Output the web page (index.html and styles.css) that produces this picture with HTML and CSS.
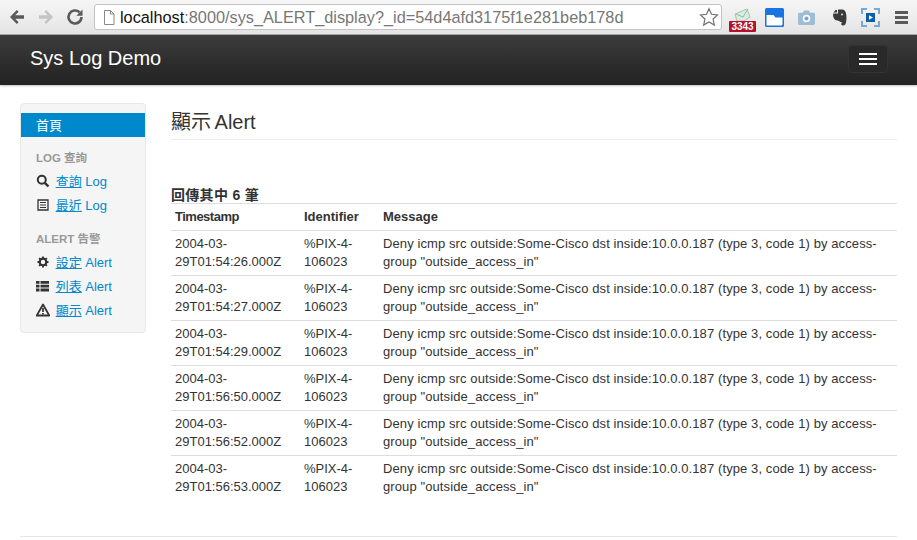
FILE: index.html
```html
<!DOCTYPE html>
<html lang="zh-Hant">
<head>
  <meta charset="UTF-8">
  <title>Sys Log Demo</title>
  <link rel="stylesheet" href="styles.css">
</head>
<body>
  <div class="browser-bar">
    <svg class="nav-icon" width="20" height="20" viewBox="0 0 20 20"><path d="M17 8.200H8.200l3.400-3.400-1.800-1.800L3 10l6.800 7 1.800-1.800-3.400-3.400H17z" fill="#5a5a5a"/></svg>
    <svg class="nav-icon" width="20" height="20" viewBox="0 0 20 20"><path d="M3 8.200h8.800L8.400 4.800 10.200 3 17 10l-6.800 7-1.800-1.800 3.400-3.400H3z" fill="#c4c4c4"/></svg>
    <svg class="nav-icon" width="20" height="20" viewBox="0 0 20 20"><path d="M16.500 10a6.500 6.500 0 1 1-2-4.700" fill="none" stroke="#5a5a5a" stroke-width="2.600"/><path d="M17.500 2.500v6.200h-6.200z" fill="#5a5a5a"/></svg>
    <div class="omnibox">
      <svg width="12" height="15" viewBox="0 0 12 15"><path d="M1.500.5h6l3.500 3.500v10.500H1.500z M7.500.5V4H11" fill="#fff" stroke="#8a8a8a"/></svg>
      <span class="url"><span class="host">localhost</span>:8000/sys_ALERT_display?_id=54d4afd3175f1e281beb178d</span>
      <svg class="star" width="20" height="20" viewBox="0 0 20 20"><path d="M10 1.800l2.500 5.500 6 .7-4.400 4 1.200 6L10 15l-5.300 3 1.200-6-4.400-4 6-.7z" fill="#fff" stroke="#707070" stroke-width="1.200"/></svg>
    </div>
    <div class="extensions">
      <div class="ext-mail">
        <svg width="20" height="14" viewBox="0 0 20 14"><path d="M2 6 14 1l3 8-6 4H4z" fill="#dcebe2" stroke="#9cc7ae"/><path d="M3 6l7 3 5-8" fill="none" stroke="#8cbda0"/></svg>
        <span class="badge">3343</span>
      </div>
      <svg width="19" height="19" viewBox="0 0 19 19"><rect width="19" height="19" rx="1.500" fill="#1a73e0"/><path d="M1.500 7h7l2 2.500h7V16a1.500 1.500 0 0 1-1 1.500H1.500z" fill="#fff"/></svg>
      <svg class="ext-camera" width="17" height="15" viewBox="0 0 18 16"><path d="M1.500 3H5l1.500-2.500h5L13 3h3.500A1.500 1.500 0 0 1 18 4.500V14.500A1.500 1.500 0 0 1 16.500 16h-15A1.500 1.500 0 0 1 0 14.500V4.500A1.500 1.500 0 0 1 1.500 3z" fill="#9dbcd6"/><circle cx="9" cy="9" r="4" fill="#fff"/><circle cx="9" cy="9" r="2.200" fill="#7ba5c8"/></svg>
      <svg class="ext-note" width="15" height="17" viewBox="0 0 15 17"><path d="M3.500 1H5v2.500H1.500zM6 .5h4c3 0 4 2.500 4.300 5.500.3 3.500.2 7-1 9.500-1 1-3 1.300-3.800.5-.6-1 0-2.500 1-2.500-1-.5-2.800-.3-3.300-1.500C4.500 11.500 2.800 11 2 9.500 1 8 1 6 1.200 4.500H6z" fill="#3a3a3a"/><circle cx="10" cy="5.500" r="1" fill="#ddd"/></svg>
      <svg width="19" height="19" viewBox="0 0 19 19"><path d="M1 6V1h5M13 1h5v5M18 13v5h-5M6 18H1v-5" fill="none" stroke="#7aa9d0" stroke-width="2"/><rect x="5" y="5" width="9" height="9" fill="#0f5fa8"/><path d="M8 7.200v4.600l4-2.300z" fill="#fff"/></svg>
    </div>
    <div class="menu-icon"><span></span><span></span><span></span></div>
  </div>

  <nav class="navbar">
    <a class="brand">Sys Log Demo</a>
    <button class="toggle"><span></span><span></span><span></span></button>
  </nav>

  <div class="page">
    <aside class="sidebar">
      <a class="nav-item active">首頁</a>
      <div class="nav-header">LOG 查詢</div>
      <a class="nav-item">
        <svg class="glyph" width="14" height="14" viewBox="0 0 14 14"><circle cx="5.800" cy="5.800" r="4" fill="none" stroke="#333" stroke-width="2"/><path d="M8.800 8.800l3.700 3.700" stroke="#333" stroke-width="2.400"/></svg>
        <span class="cjk-link">查詢</span> Log
      </a>
      <a class="nav-item">
        <svg class="glyph" width="14" height="14" viewBox="0 0 14 14"><path d="M2 2h10v10H2z" fill="none" stroke="#333" stroke-width="1.300"/><path d="M4 4.500h6M4 7h6M4 9.500h6" stroke="#333" stroke-width="1.200"/></svg>
        <span class="cjk-link">最近</span> Log
      </a>
      <div class="nav-header second">ALERT 告警</div>
      <a class="nav-item">
        <svg class="glyph" width="14" height="14" viewBox="0 0 14 14"><circle cx="7" cy="7" r="3.300" fill="none" stroke="#333" stroke-width="2.200"/><path d="M7 1.500v2M7 10.500v2M1.500 7h2M10.500 7h2M3.100 3.100l1.400 1.400M9.500 9.500l1.400 1.400M10.900 3.100 9.500 4.500M4.500 9.500l-1.400 1.400" stroke="#333" stroke-width="1.800"/></svg>
        <span class="cjk-link">設定</span> Alert
      </a>
      <a class="nav-item">
        <svg class="glyph" width="14" height="14" viewBox="0 0 14 14"><path d="M0 2h3.500v2.800H0zM4.500 2H13v2.800H4.500zM0 5.800h3.500v2.800H0zM4.500 5.800H13v2.800H4.500zM0 9.600h3.500v2.800H0zM4.500 9.600H13v2.800H4.500z" fill="#333"/></svg>
        <span class="cjk-link">列表</span> Alert
      </a>
      <a class="nav-item">
        <svg class="glyph" width="14" height="14" viewBox="0 0 14 14"><path d="M7 1.500l6.300 11H.7z" fill="none" stroke="#333" stroke-width="1.800" stroke-linejoin="round"/><path d="M7 5v4M7 10v1.500" stroke="#333" stroke-width="1.700"/></svg>
        <span class="cjk-link">顯示</span> Alert
      </a>
    </aside>

    <main class="content">
      <h1 class="page-title">顯示 Alert</h1>
      <div class="caption">回傳其中 6 筆</div>
      <table class="log-table">
        <thead>
          <tr><th class="col-time">Timestamp</th><th class="col-id">Identifier</th><th>Message</th></tr>
        </thead>
        <tbody>
          <tr><td>2004-03-<br>29T01:54:26.000Z</td><td>%PIX-4-<br>106023</td><td class="msg">Deny icmp src outside:Some-Cisco dst inside:10.0.0.187 (type 3, code 1) by access-<br>group "outside_access_in"</td></tr>
          <tr><td>2004-03-<br>29T01:54:27.000Z</td><td>%PIX-4-<br>106023</td><td class="msg">Deny icmp src outside:Some-Cisco dst inside:10.0.0.187 (type 3, code 1) by access-<br>group "outside_access_in"</td></tr>
          <tr><td>2004-03-<br>29T01:54:29.000Z</td><td>%PIX-4-<br>106023</td><td class="msg">Deny icmp src outside:Some-Cisco dst inside:10.0.0.187 (type 3, code 1) by access-<br>group "outside_access_in"</td></tr>
          <tr><td>2004-03-<br>29T01:56:50.000Z</td><td>%PIX-4-<br>106023</td><td class="msg">Deny icmp src outside:Some-Cisco dst inside:10.0.0.187 (type 3, code 1) by access-<br>group "outside_access_in"</td></tr>
          <tr><td>2004-03-<br>29T01:56:52.000Z</td><td>%PIX-4-<br>106023</td><td class="msg">Deny icmp src outside:Some-Cisco dst inside:10.0.0.187 (type 3, code 1) by access-<br>group "outside_access_in"</td></tr>
          <tr><td>2004-03-<br>29T01:56:53.000Z</td><td>%PIX-4-<br>106023</td><td class="msg">Deny icmp src outside:Some-Cisco dst inside:10.0.0.187 (type 3, code 1) by access-<br>group "outside_access_in"</td></tr>
        </tbody>
      </table>
    </main>
  </div>
  <hr class="footer-line">
</body>
</html>
```

FILE: styles.css
```css
html, body {
  height: 540px;
}
body {
  margin: 0;
  overflow: hidden;
  background: #fff;
  color: #333;
  font-family: "Liberation Sans", "Noto Sans CJK TC", sans-serif;
  font-size: 13px;
  line-height: 18px;
}

/* browser chrome */
.browser-bar {
  display: flex;
  align-items: center;
  height: 34px;
  padding-left: 7px;
  background: linear-gradient(#f6f6f6, #e4e4e4);
  border-bottom: 1px solid #a8a8a8;
}
.nav-icon {
  margin-right: 9px;
  flex: none;
}
.omnibox {
  display: flex;
  align-items: center;
  width: 628px;
  height: 26px;
  padding-left: 8px;
  box-sizing: border-box;
  background: #fff;
  border: 1px solid #c4c4c4;
  border-radius: 3px;
  flex: none;
}
.url {
  margin-left: 5px;
  font-size: 16.3px;
  color: #777;
  white-space: nowrap;
  flex: 1;
}
.host {
  color: #111;
}
.star {
  margin-right: 2px;
}
.extensions {
  display: flex;
  align-items: center;
  gap: 14px;
  margin-left: 7px;
}
.ext-mail {
  position: relative;
  width: 27px;
  height: 24px;
  margin-right: -5px;
  margin-top: 6px;
}
.ext-mail svg {
  position: absolute;
  top: 0;
  left: 4px;
}
.ext-note {
  margin-left: 3px;
}
.badge {
  position: absolute;
  left: 0;
  bottom: 0;
  width: 27px;
  height: 11px;
  background: #b5102a;
  border-radius: 1px;
  color: #fff;
  font-size: 10px;
  font-weight: bold;
  line-height: 11px;
  text-align: center;
}
.menu-icon {
  display: flex;
  flex-direction: column;
  gap: 2px;
  margin-left: 15px;
}
.menu-icon span {
  display: block;
  width: 13px;
  height: 3px;
  background: #5a5a5a;
}

/* navbar */
.navbar {
  display: flex;
  align-items: center;
  justify-content: space-between;
  height: 50px;
  padding: 0 29px 0 30px;
  background: linear-gradient(#3c3c3c, #222);
  box-shadow: 0 1px 2px rgba(0, 0, 0, 0.25);
}
.brand {
  margin-bottom: 4px;
  color: #fff;
  font-size: 20px;
}
.toggle {
  display: flex;
  flex-direction: column;
  align-items: center;
  gap: 3px;
  width: 40px;
  height: 28px;
  padding: 7px 0 0;
  margin-bottom: 2px;
  background: #292929;
  border: 1px solid #333;
  border-radius: 4px;
}
.toggle span {
  display: block;
  width: 18px;
  height: 2px;
  background: #fff;
}

/* page */
.page {
  display: flex;
  align-items: flex-start;
  gap: 25px;
  padding: 18px 20px 0;
}
.sidebar {
  width: 126px;
  height: 230px;
  padding: 9px 0;
  box-sizing: border-box;
  background: #f5f5f5;
  border: 1px solid #e8e8e8;
  border-radius: 4px;
  flex: none;
}
.nav-item {
  display: block;
  height: 24px;
  padding-left: 15px;
  color: #0088cc;
  font-size: 13px;
  line-height: 24px;
}
.nav-item.active {
  background: #0088cc;
  color: #fff;
  line-height: 26px;
}
.glyph {
  display: inline-block;
  width: 14px;
  height: 14px;
  margin-right: 2px;
  vertical-align: -2px;
}
.cjk-link {
  text-decoration: underline;
}
.nav-header {
  height: 18px;
  margin-top: 12px;
  margin-bottom: 3px;
  padding-left: 15px;
  color: #999;
  font-size: 11.5px;
  font-weight: bold;
  line-height: 18px;
}
.nav-header.second {
  margin-top: 12px;
}
.content {
  flex: 1;
  min-width: 0;
}
.page-title {
  margin: 0;
  height: 36px;
  border-bottom: 1px solid #eee;
  color: #333;
  font-size: 20px;
  font-weight: normal;
  line-height: 38px;
  word-spacing: -2px;
}
.caption {
  margin-top: 47px;
  height: 16px;
  color: #333;
  font-size: 14px;
  font-weight: bold;
  line-height: 17px;
  letter-spacing: 0.3px;
}
.log-table {
  width: 100%;
  border-collapse: collapse;
  table-layout: fixed;
  font-size: 13px;
}
.log-table th,
.log-table td {
  padding: 4px 4px;
  border-top: 1px solid #ddd;
  text-align: left;
  vertical-align: top;
  line-height: 18px;
}
.log-table th {
  border-bottom: 1px solid #ddd;
  font-weight: bold;
}
.log-table .col-time {
  width: 121px;
  letter-spacing: -0.5px;
}
.col-id {
  width: 71px;
}
.msg {
  letter-spacing: 0.1px;
}
.footer-line {
  position: absolute;
  left: 20px;
  right: 20px;
  top: 536px;
  margin: 0;
  border: 0;
  border-top: 1px solid #e6e6e6;
}
```
